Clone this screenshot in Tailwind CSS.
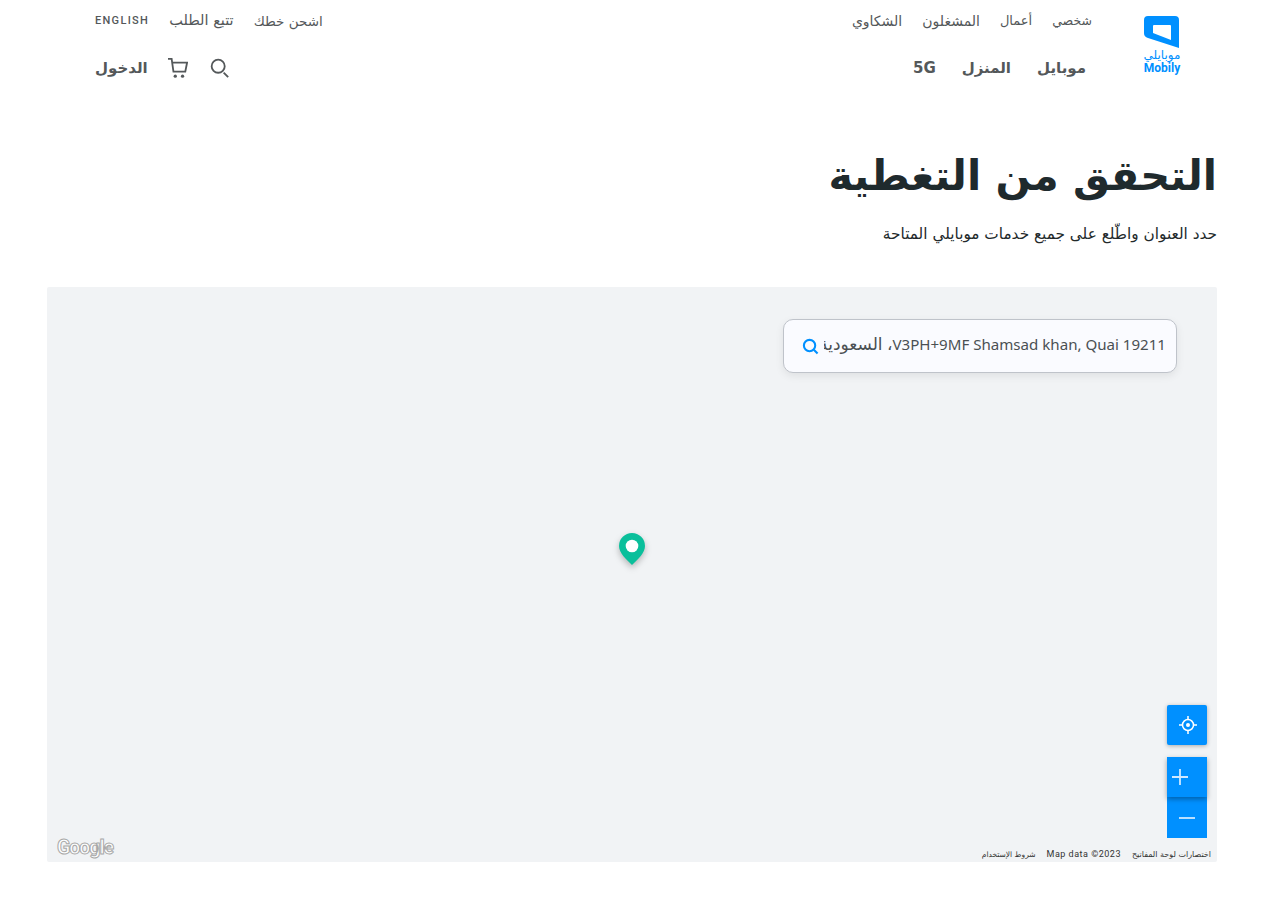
<!DOCTYPE html>
<html lang="ar" dir="rtl">
<head>
    <meta charset="UTF-8">
    <meta name="viewport" content="width=device-width, initial-scale=1.0">
    <title>Mobily</title>
    <script src="https://cdn.jsdelivr.net/npm/@tailwindcss/browser@4"></script>
</head>
<body class="bg-white font-['Noto_Sans','DejaVu_Sans',sans-serif] text-[#22292b]">
    <!-- Header -->
    <header class="flex pr-[81px] pl-[95px] h-[100px]">
        <div class="w-9 mt-4 flex flex-col items-center shrink-0 text-[#0090ff]">
            <svg viewBox="0 0 36 32" class="w-9 h-8">
                <path fill="#0090ff" d="M4 0H31a4 4 0 0 1 4 4V32L4 22a5 5 0 0 1-4-5V4a4 4 0 0 1 4-4Z"/>
                <path fill="#fff" d="M10 9H26a1 1 0 0 1 1 1V24L9 17V10a1 1 0 0 1 1-1Z"/>
            </svg>
            <span class="text-[12px] leading-[14px] font-medium font-['DejaVu_Sans'] whitespace-nowrap">موبايلي</span>
            <span class="text-[12px] leading-[13px] font-bold font-['Roboto']" dir="ltr">Mobily</span>
        </div>
        <div class="flex-1 mr-[52px]">
            <div class="flex justify-between items-center h-[14px] mt-[14px] text-[13px] text-[#54585a] font-['DejaVu_Sans']">
                <nav class="flex items-center gap-[20px]">
                    <a class="text-[12.500px]">شخصي</a>
                    <a>أعمال</a>
                    <a class="text-[14px]">المشغلون</a>
                    <a class="text-[14px]">الشكاوي</a>
                </nav>
                <nav class="flex gap-[20px] items-center">
                    <a class="text-[13.500px]">اشحن خطك</a>
                    <a class="text-[14.500px]">تتبع الطلب</a>
                    <a class="font-['Roboto'] font-medium text-[11px] tracking-[1.3px]">ENGLISH</a>
                </nav>
            </div>
            <div class="flex justify-between items-center mt-[26px] h-[28px] text-[#54585a] font-bold text-[15px] font-['DejaVu_Sans']">
                <nav class="flex gap-[26px] mr-[6px]">
                    <a>موبايل</a>
                    <a>المنزل</a>
                    <a>5G</a>
                </nav>
                <div class="flex items-center gap-[20px]">
                    <svg viewBox="0 0 22 22" class="w-5 h-5 ml-[2px]" fill="none" stroke="#54585a" stroke-width="2"><circle cx="9" cy="9" r="7.2"/><path d="M15 16l5 5"/></svg>
                    <svg viewBox="0 0 22 22" class="w-5 h-5" fill="none" stroke="#54585a" stroke-width="2"><path d="M0 1h4l2 14h13l2-10H5"/><circle cx="8" cy="20" r="1.800" fill="#54585a" stroke="none"/><circle cx="16" cy="20" r="1.800" fill="#54585a" stroke="none"/></svg>
                    <a>الدخول</a>
                </div>
            </div>
        </div>
    </header>

    <main class="pr-[44px] pl-[47px]">
        <h1 class="text-[41.500px] leading-[56px] font-bold mt-[48px] text-[#1f2a2d] font-['DejaVu_Sans']">التحقق من التغطية</h1>
        <p class="text-[15.300px] leading-[22px] mt-[19px] font-['DejaVu_Sans']">حدد العنوان واطّلع على جميع خدمات موبايلي المتاحة</p>

        <!-- Map -->
        <div class="relative mt-[42px] h-[575px] bg-[#f1f3f5] rounded-[2px]">
            <div class="absolute top-[32px] right-[40px] w-[394px] h-[54px] flex items-center gap-[5px] pr-[10px] pl-[18px] bg-[#fafbff] border border-[#bfc3ca] rounded-[10px] shadow-[0_3px_8px_rgba(0,0,0,0.08)]">
                <div class="flex-1 overflow-hidden whitespace-nowrap text-[15.100px] leading-[22px] pb-[4px] text-[#4a5053] font-['Noto_Sans','DejaVu_Sans']">V3PH+9MF Shamsad khan, Quai 19211<span class="text-[17px]">، السعودية</span></div>
                <svg viewBox="0 0 18 18" class="w-[17px] h-[17px] shrink-0" fill="none" stroke="#0090ff" stroke-width="2.2"><circle cx="8" cy="8" r="6"/><path d="M12.5 12.5l4 4"/></svg>
            </div>

            <svg viewBox="0 0 26 32" class="absolute left-[572px] top-[246px] w-[26px] h-8 drop-shadow-[0_3px_3px_rgba(0,0,0,0.25)]">
                <path fill="#0abf9b" d="M13 0a13 13 0 0 1 13 13c0 7-7 13-13 19C7 26 0 20 0 13A13 13 0 0 1 13 0Z"/>
                <circle cx="13" cy="13" r="6.3" fill="#fff"/>
            </svg>

            <div class="absolute top-[418px] right-[10px] flex flex-col">
                <button class="w-10 h-10 rounded-[2px] bg-[#0090ff] flex items-center justify-center shadow-[0_1px_4px_rgba(0,0,0,0.3)]">
                    <svg viewBox="0 0 18 18" class="w-[18px] h-[18px] ml-[2px]" fill="none" stroke="#fff" stroke-width="1.5"><circle cx="9" cy="9" r="5.5"/><circle cx="9" cy="9" r="2" fill="#fff" stroke="none"/><path d="M9 0v3.500M9 14.500V18M0 9h3.500M14.500 9H18"/></svg>
                </button>
                <button class="w-10 h-10 mt-3 bg-[#0090ff] relative z-10 shadow-[0_2px_5px_rgba(0,0,0,0.35)]">
                    <svg viewBox="0 0 16 16" class="absolute left-[5px] top-[12px] w-4 h-4" fill="none" stroke="#cfe8ff" stroke-width="1.8"><path d="M8 0v16M0 8h16"/></svg>
                </button>
                <button class="w-10 h-[41px] bg-[#0090ff] relative">
                    <svg viewBox="0 0 16 16" class="absolute left-[12px] top-[13px] w-4 h-4" fill="none" stroke="#cfe8ff" stroke-width="1.8"><path d="M0 8h16"/></svg>
                </button>
            </div>

            <div class="absolute left-[10px] bottom-[2px] text-[19.500px] leading-[24px] font-bold font-['Roboto'] text-white [-webkit-text-stroke:1px_#a8a8a8] tracking-[-1px]" dir="ltr">Google</div>

            <div class="absolute right-[6px] bottom-[2px] flex gap-[11px] text-[8px] leading-[11px] text-[#333] font-['DejaVu_Sans']">
                <span>اختصارات لوحة المفاتيح</span>
                <span class="font-['Roboto'] text-[9px] tracking-[0.5px]" dir="ltr">Map data ©2023</span>
                <span class="text-[7.500px]">شروط الإستخدام</span>
            </div>
        </div>
    </main>
</body>
</html>
